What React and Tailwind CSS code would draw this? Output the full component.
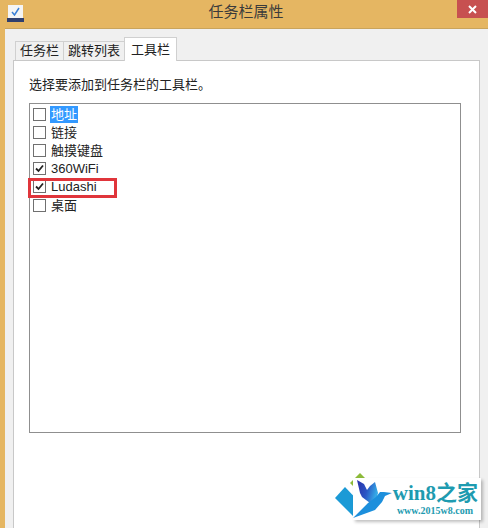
const Row = ({ checked, selected, children }) => (
  <div className="flex items-center h-[18.2px]">
    <span className="w-[13px] h-[13px] border border-[#707070] bg-white mr-[4px] flex items-center justify-center shrink-0">
      {checked && (
        <svg width="11" height="11" viewBox="0 0 11 11">
          <path d="M2 5.5 L4.5 8 L9 2.5" fill="none" stroke="#222" strokeWidth="1.8" />
        </svg>
      )}
    </span>
    <span className={selected ? "bg-[#3399ff] text-white px-px leading-[17px]" : "px-px leading-[17px] text-[#222]"}>{children}</span>
  </div>
);

const Diamonds = () => (
  <svg width="60" height="50" viewBox="0 0 60 50" className="absolute left-[334px] top-[472px]">
    <path d="M26 1 L36 11 L26 21 L16 11 Z" fill="#8dbb3a" />
    <path d="M11 15 L1 26 L20 45 L30 35 Z" fill="#1b9ad6" />
  </svg>
);

const Bird = () => (
  <svg width="60" height="50" viewBox="0 0 60 50" className="absolute left-[334px] top-[472px]">
    <defs>
      <linearGradient id="wing" x1="0" y1="0" x2="1" y2="0.3">
        <stop offset="0" stopColor="#2a2fa8" />
        <stop offset="0.55" stopColor="#2b56c4" />
        <stop offset="1" stopColor="#35a9e6" />
      </linearGradient>
    </defs>
    <path d="M23 8 L30 12 L33 18 L36 14 L41 10 L44 21 L42 28 L36 31 L28 25 L26 21 Z" fill="url(#wing)" />
    <path d="M19 46 L34 31 L42 25 L46 20 L50 20 L58 21 L51 24 L48 30 L41 38 L30 42 Z" fill="#1c8fdc" />
  </svg>
);

export default function App() {
  return (
    <div className="w-[488px] h-[528px] bg-[#e5b662] flex flex-col overflow-hidden relative font-['Liberation_Sans','Noto_Sans_CJK_SC',sans-serif] text-[13px] text-[#222]">
      {/* title bar */}
      <div className="h-[28px] flex items-center shrink-0 relative">
        <div className="ml-[7px] w-[17px] h-[17px] flex flex-col items-center justify-end mb-[2px]">
          <div className="w-[15px] h-[13px] bg-[#f4f4f4] flex items-center justify-center">
            <svg width="9" height="9" viewBox="0 0 9 9"><path d="M1 5 L3.5 8 L8 1" fill="none" stroke="#3a7fd5" strokeWidth="1.5" /></svg>
          </div>
          <div className="w-[17px] h-[4px] bg-[#2f3f6e]" />
        </div>
        <div className="flex-1 text-center text-[15px] text-[#3b3b3b] pr-[20px] pb-[4px]">任务栏属性</div>
        <div className="absolute right-0 top-0 w-[31px] h-[18px] bg-[#c75050] flex items-center justify-center">
          <svg width="9" height="9" viewBox="0 0 9 9"><path d="M1 1 L8 8 M8 1 L1 8" stroke="#fff" strokeWidth="2" /></svg>
        </div>
      </div>

      {/* dialog body */}
      <div className="flex-1 ml-[5px] bg-[#f0f0f0] border-t border-[#c9a45c] pt-[9px] pl-[8px] pr-[8px] flex flex-col">
        <div className="flex items-end h-[22px] pl-[2px] relative z-10">
          <div className="h-[19px] w-[49px] bg-[#f0f0f0] border border-[#d0d0d0] border-b-0 text-center leading-[18px]">任务栏</div>
          <div className="h-[19px] w-[62px] -ml-px bg-[#f0f0f0] border border-[#d0d0d0] border-b-0 text-center leading-[18px]">跳转列表</div>
          <div className="h-[24px] w-[53px] -ml-px bg-white border border-[#d0d0d0] border-b-0 text-center leading-[23px] -mb-px">工具栏</div>
        </div>
        <div className="flex-1 bg-white border border-b-0 border-[#c8c8c8] pt-[13px] pl-[15px] pr-[18px] pb-[95px] flex flex-col">
          <div className="h-[22px] leading-[22px] text-[#222]">选择要添加到任务栏的工具栏。</div>
          <div className="mt-[7px] flex-1 border border-[#8f8f8f] pt-[1px] pl-[3px] flex flex-col">
            <Row selected>地址</Row>
            <Row>链接</Row>
            <Row>触摸键盘</Row>
            <Row checked>360WiFi</Row>
            <Row checked>Ludashi</Row>
            <Row>桌面</Row>
          </div>
        </div>
      </div>

      {/* annotation */}
      <div className="absolute left-[28px] top-[178px] w-[89px] h-[20px] border-[3px] border-[#e0353b]" />

      {/* watermark */}
      <Diamonds />
      <div className="absolute left-[353px] top-[478px] w-[128px] h-[42px] bg-white shadow-[2px_2px_3px_rgba(0,0,0,0.25)] flex flex-col items-end pr-[3px]">
        <div className="font-['Liberation_Serif','Noto_Sans_CJK_SC',serif] font-bold text-[21px] leading-[24px] mt-[3px] text-[#1e9bb0]">win8之家</div>
        <div className="font-['Liberation_Serif',serif] font-bold text-[10px] leading-[11px] mr-[5px] text-[#1e9bb0]">www.2015w8.com</div>
      </div>
      <Bird />
    </div>
  );
}
